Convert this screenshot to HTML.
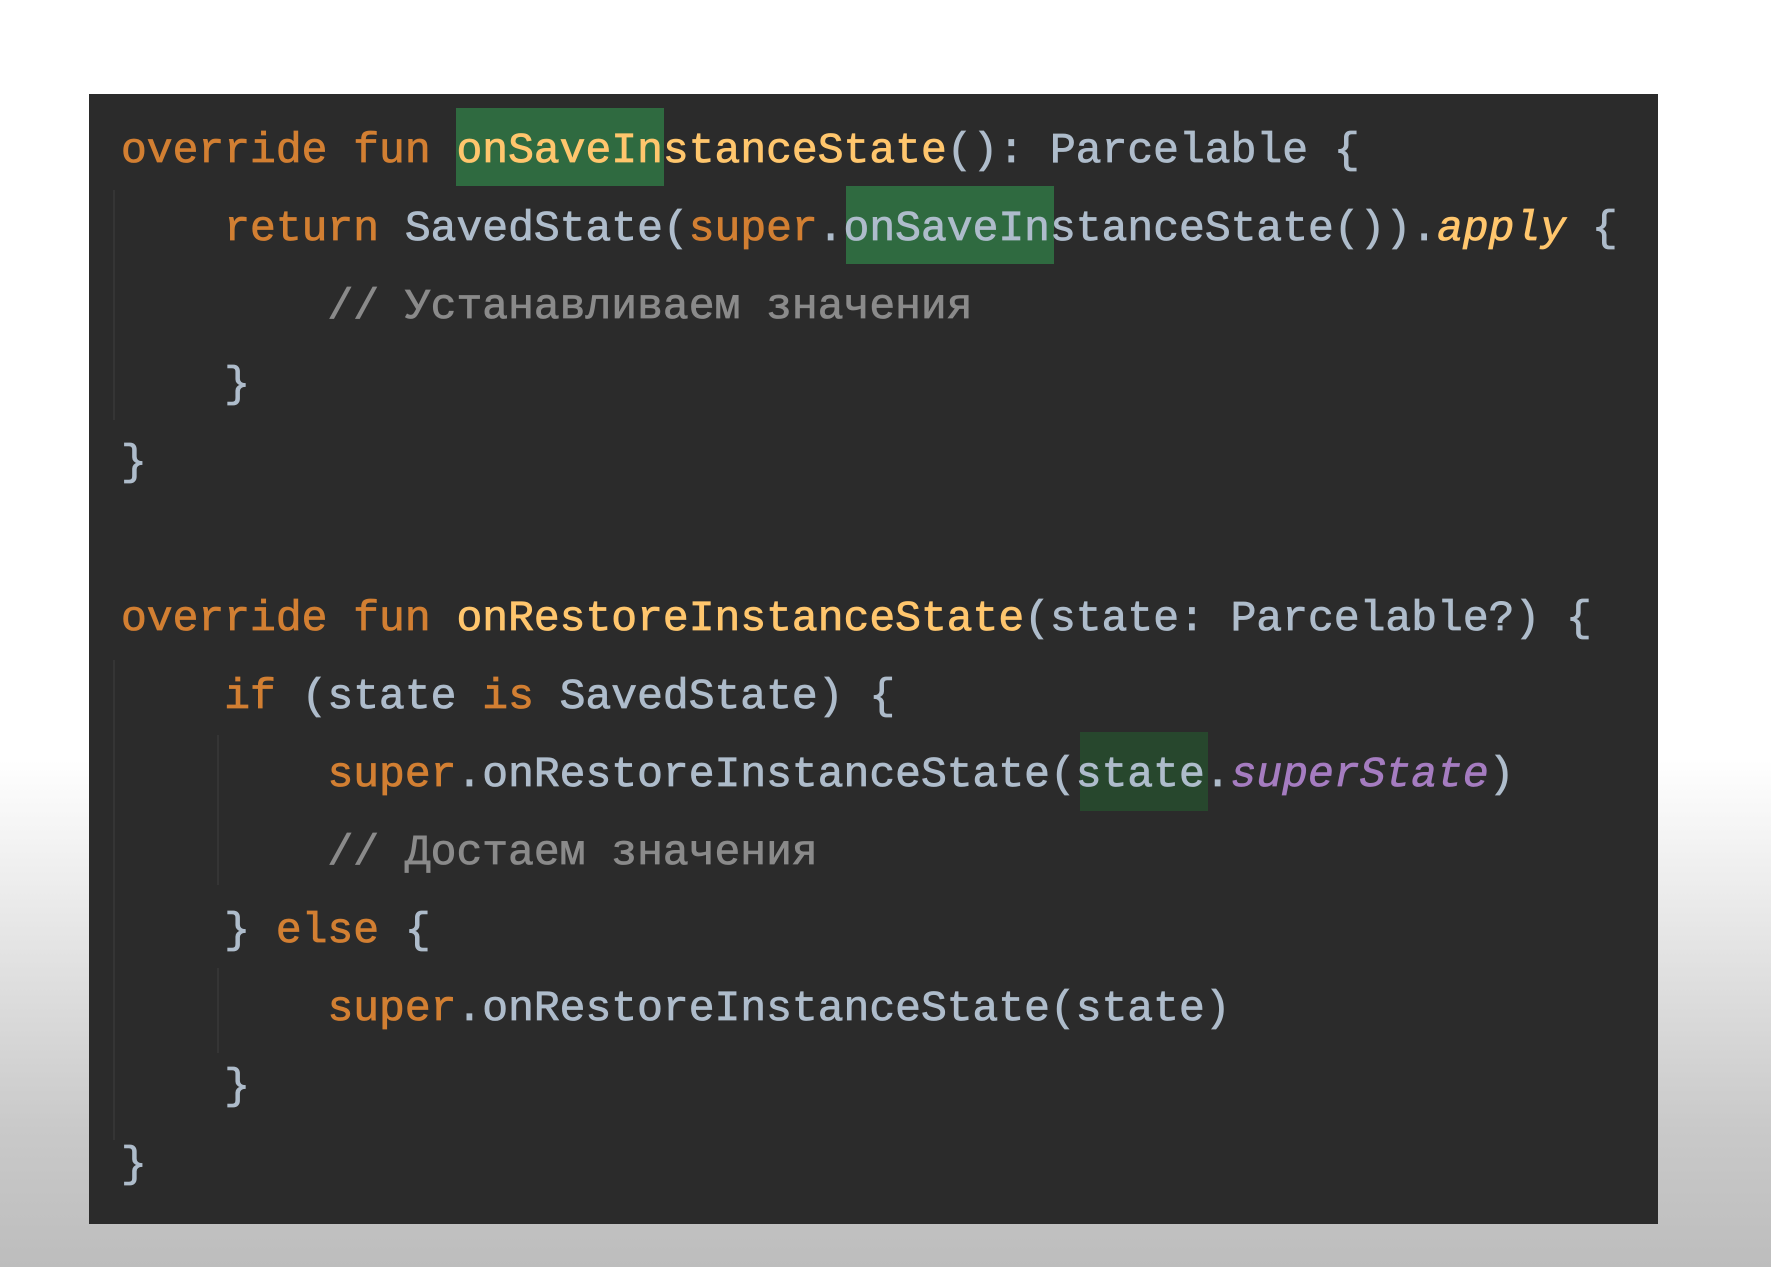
<!DOCTYPE html>
<html><head><meta charset="utf-8"><style>
html,body{margin:0;padding:0;}
body{width:1771px;height:1267px;position:relative;overflow:hidden;
background:linear-gradient(to bottom,#ffffff 0px,#ffffff 760px,#c9c9c9 1130px,#bdbdbd 1267px);}
.box{position:absolute;left:89px;top:94px;width:1569px;height:1130px;background:#2b2b2b;}
.hl{position:absolute;background:#2f6a40;}
.guide{position:absolute;width:2px;background:#353535;}
.code{position:absolute;left:121px;top:112px;margin:0;font-family:"Liberation Mono","Noto Sans CJK SC",monospace;font-size:43px;line-height:78px;color:#aebccb;white-space:pre;-webkit-text-stroke:0.8px;}
.k{color:#d27f32}.f{color:#ffc66d}.c{color:#8a8a8a}.p{color:#a57cc0;font-style:italic}.i{color:#ffc66d;font-style:italic}
</style></head><body>
<div class="box"></div>
<div class="guide" style="left:113px;top:190px;height:230px"></div>
<div class="guide" style="left:113px;top:660px;height:480px"></div>
<div class="guide" style="left:217px;top:735px;height:150px"></div>
<div class="guide" style="left:217px;top:968px;height:85px"></div>
<div class="hl" style="left:456px;top:108px;width:208px;height:78px"></div>
<div class="hl" style="left:846px;top:186px;width:208px;height:78px"></div>
<div class="hl" style="left:1080px;top:732px;width:128px;height:79px;background:#27472d"></div>
<pre class="code"><span class="k">override fun </span><span class="f">onSaveInstanceState</span>(): Parcelable {
    <span class="k">return </span>SavedState(<span class="k">super</span>.onSaveInstanceState()).<span class="i">apply</span> {
        <span class="c">// Устанавливаем значения</span>
    }
}

<span class="k">override fun </span><span class="f">onRestoreInstanceState</span>(state: Parcelable?) {
    <span class="k">if</span> (state <span class="k">is</span> SavedState) {
        <span class="k">super</span>.onRestoreInstanceState(state.<span class="p">superState</span>)
        <span class="c">// Достаем значения</span>
    } <span class="k">else</span> {
        <span class="k">super</span>.onRestoreInstanceState(state)
    }
}</pre>
</body></html>
